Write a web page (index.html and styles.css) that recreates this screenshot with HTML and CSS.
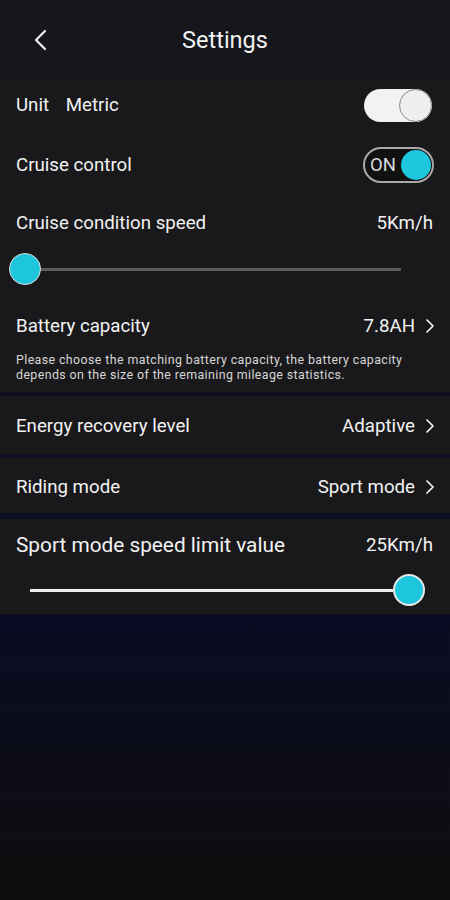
FILE: index.html
```html
<!DOCTYPE html>
<html lang="en">
<head>
    <meta charset="UTF-8">
    <meta name="viewport" content="width=device-width, initial-scale=1.0">
    <title>Settings</title>
    <link rel="stylesheet" href="styles.css">
</head>
<body>
    <div class="header">
        <svg class="back" width="14" height="22" viewBox="0 0 14 22">
            <path d="M12 2 L3 11 L12 20" fill="none" stroke="#f2f2f2" stroke-width="2.2" stroke-linecap="round" stroke-linejoin="round"/>
        </svg>
        <h1>Settings</h1>
    </div>

    <div class="section first">
        <div class="row unit-row">
            <span>Unit <span class="metric">Metric</span></span>
            <div class="toggle light"><div class="knob"></div></div>
        </div>
        <div class="row cruise-row">
            <span>Cruise control</span>
            <div class="toggle dark"><span class="on">ON</span><div class="knob"></div></div>
        </div>
        <div class="row speed-row">
            <span>Cruise condition speed</span>
            <span class="value">5Km/h</span>
        </div>
        <div class="slider grey">
            <div class="thumb"></div>
            <div class="line"></div>
        </div>
        <div class="row battery-row">
            <span>Battery capacity</span>
            <span class="value">7.8AH <svg class="chev" width="10" height="16" viewBox="0 0 10 16"><path d="M2 2 L8 8 L2 14" fill="none" stroke="#f2f2f2" stroke-width="1.7" stroke-linecap="round" stroke-linejoin="round"/></svg></span>
        </div>
        <p class="note">Please choose the matching battery capacity, the battery capacity depends on the size of the remaining mileage statistics.</p>
    </div>

    <div class="section energy">
        <div class="row">
            <span>Energy recovery level</span>
            <span class="value">Adaptive <svg class="chev" width="10" height="16" viewBox="0 0 10 16"><path d="M2 2 L8 8 L2 14" fill="none" stroke="#f2f2f2" stroke-width="1.7" stroke-linecap="round" stroke-linejoin="round"/></svg></span>
        </div>
    </div>

    <div class="section riding">
        <div class="row">
            <span>Riding mode</span>
            <span class="value">Sport mode <svg class="chev" width="10" height="16" viewBox="0 0 10 16"><path d="M2 2 L8 8 L2 14" fill="none" stroke="#f2f2f2" stroke-width="1.7" stroke-linecap="round" stroke-linejoin="round"/></svg></span>
        </div>
    </div>

    <div class="section sport">
        <div class="row sport-row">
            <span class="big">Sport mode speed limit value</span>
            <span class="value">25Km/h</span>
        </div>
        <div class="slider white">
            <div class="line"></div>
            <div class="thumb"></div>
        </div>
    </div>

    <div class="bottom"></div>
</body>
</html>
```

FILE: styles.css
```css
body {
    margin: 0;
    width: 450px;
    height: 900px;
    display: flex;
    flex-direction: column;
    background-color: #0e0f22;
    font-family: Roboto, "Liberation Sans", sans-serif;
    color: #f2f2f2;
    overflow: hidden;
}
.header {
    height: 75px;
    background-color: #15171c;
    display: flex;
    align-items: center;
    justify-content: center;
    position: relative;
}
.header h1 {
    margin: 4px 0 0;
    font-size: 23.5px;
    font-weight: normal;
}
.back {
    position: absolute;
    left: 33px;
    top: 29px;
}
.section {
    background-color: #19191b;
    padding: 0 17px 0 16px;
}
.section.first {
    padding-bottom: 10px;
}
.energy, .riding {
    margin-top: 4px;
}
.sport {
    margin-top: 6px;
    padding-bottom: 5px;
}
.row {
    display: flex;
    align-items: center;
    justify-content: space-between;
    font-size: 18.7px;
}
.unit-row, .cruise-row {
    height: 60px;
}
.metric {
    margin-left: 12px;
}
.speed-row {
    height: 56px;
}
.battery-row {
    height: 52px;
    margin-top: 13px;
}
.energy .row {
    height: 58px;
    padding-top: 2px;
    box-sizing: border-box;
}
.riding .row {
    height: 55px;
    padding-top: 2px;
    box-sizing: border-box;
}
.sport-row {
    height: 52px;
}
.big {
    font-size: 20.8px;
}
.value {
    display: flex;
    align-items: center;
    gap: 10px;
}
.chev {
    margin-right: -2px;
}
.note {
    margin: 0;
    padding-right: 20px;
    font-size: 12.4px;
    letter-spacing: 0.4px;
    line-height: 15px;
    color: #d6d6d6;
}
.toggle {
    display: flex;
    align-items: center;
    border-radius: 20px;
    box-sizing: border-box;
}
.toggle.light {
    width: 68px;
    height: 33px;
    background-color: #f2f2f2;
    justify-content: flex-end;
    margin-right: 1px;
}
.toggle.light .knob {
    width: 33px;
    height: 33px;
    border-radius: 50%;
    box-sizing: border-box;
    border: 1px solid #8a8a8a;
    background-color: #efefef;
}
.toggle.dark {
    width: 71px;
    height: 36px;
    border: 2px solid #a9a9a9;
    background-color: #111;
    justify-content: space-between;
    padding: 0 1px 0 5px;
    margin-right: -1px;
}
.on {
    font-size: 18.5px;
    color: #dcdcdc;
}
.toggle.dark .knob {
    width: 30px;
    height: 30px;
    border-radius: 50%;
    background-color: #1ec6de;
}
.slider {
    display: flex;
    align-items: center;
    height: 36px;
}
.slider .thumb {
    width: 32px;
    height: 32px;
    border-radius: 50%;
    box-sizing: border-box;
    background-color: #1dc5dd;
    flex-shrink: 0;
}
.slider.grey {
    margin-left: -7px;
}
.slider.grey .thumb {
    border: 1px solid #dcdcdc;
}
.slider.grey .line {
    width: 360px;
    height: 3px;
    background-color: #5a5a5a;
}
.slider.white {
    height: 38px;
    margin-left: 14px;
}
.slider.white .thumb {
    border: 2px solid #e8e8e8;
}
.slider.white .line {
    width: 363px;
    height: 3px;
    background-color: #eeeeee;
}
.bottom {
    flex: 1;
    background: linear-gradient(#0a0c24, #0e0e10 90%);
}
```
